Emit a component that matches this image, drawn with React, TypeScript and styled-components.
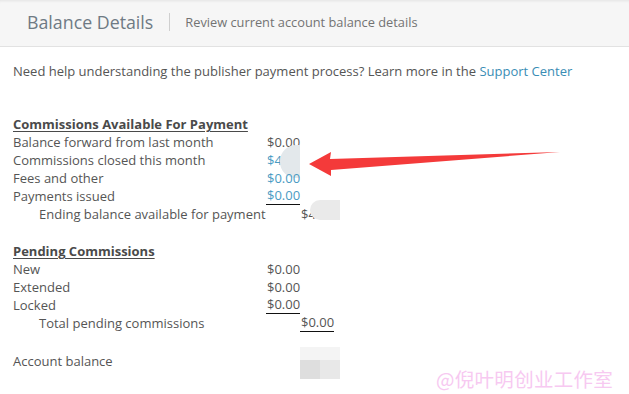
import React from "react";
import styled, { createGlobalStyle } from "styled-components";

const GlobalStyle = createGlobalStyle`
  html, body { margin: 0; padding: 0; background: #ffffff; }
  body { font-family: "Open Sans", "Noto Sans", sans-serif; color: #555; }
  * { box-sizing: border-box; }
`;

const Page = styled.div`
  position: relative;
  width: 629px;
  height: 394px;
  overflow: hidden;
  background: #fff;
`;

const Header = styled.header`
  height: 47px;
  display: flex;
  align-items: center;
  padding: 0 0 2px 27px;
  background: #f6f6f6;
  border-bottom: 1px solid #e2e2e2;
  box-shadow: inset 0 3px 3px -2px rgba(0, 0, 0, 0.08);
`;

const Title = styled.h1`
  margin: 0;
  font-size: 17.8px;
  font-weight: 400;
  color: #6f7a84;
`;

const Divider = styled.span`
  width: 1px;
  height: 18px;
  margin: 0 15px 0 16px;
  background: #cfcfcf;
`;

const Subtitle = styled.span`
  font-size: 12.8px;
  color: #737373;
`;

const Body = styled.main`
  padding: 15px 13px 0 13px;
`;

const Intro = styled.p`
  margin: 0;
  font-size: 13px;
  line-height: 18px;
  color: #555;
`;

const Link = styled.a`
  color: #3a8db5;
  text-decoration: none;
`;

const Ledger = styled.table<{ $gap: number }>`
  border-collapse: collapse;
  table-layout: fixed;
  width: 330px;
  margin-top: ${(p) => p.$gap}px;
  font-size: 13px;
  color: #555;
`;

const LabelCol = styled.col`
  width: 253px;
`;

const AmountCol = styled.col`
  width: 34px;
`;

const Row = styled.tr`
  height: 18px;
`;

const Heading = styled.th`
  height: 18px;
  text-align: left;
  font-weight: 700;
  text-decoration: underline;
  text-underline-offset: 2px;
  color: #4a4a4a;
  padding: 0;
  line-height: 18px;
  white-space: nowrap;
`;

const Label = styled.td<{ $indent?: boolean }>`
  height: 18px;
  padding: 0 0 0 ${(p) => (p.$indent ? 26 : 0)}px;
  line-height: 18px;
  white-space: nowrap;
`;

const Amount = styled.td<{ $link?: boolean }>`
  position: relative;
  height: 18px;
  padding: 0 0 0 1px;
  line-height: 18px;
  white-space: nowrap;
  vertical-align: top;
  color: ${(p) => (p.$link ? "#4a9bc3" : "#555")};
`;

const Ruled = styled.span`
  display: block;
  width: 34px;
  height: 18px;
  margin-left: -1px;
  padding-left: 1px;
  border-bottom: 1.5px solid #111;
  line-height: 17px;
`;

/* soft patch laid over a hidden figure */
const Masked = styled.span<{ $tone: string; $x: number; $y: number; $w: number; $h: number }>`
  position: absolute;
  left: ${(p) => p.$x}px;
  top: ${(p) => p.$y}px;
  width: ${(p) => p.$w}px;
  height: ${(p) => p.$h}px;
  border-radius: 16px 0 0 16px;
  background: ${(p) => p.$tone};
`;

const Smudge = styled.span`
  position: absolute;
  left: 0;
  top: -5px;
  display: grid;
  grid-template-columns: 20px 20px;
  grid-template-rows: 13px 19px;
`;

const Cell = styled.span<{ $tone: string }>`
  background: ${(p) => p.$tone};
`;

const Pointer = styled.svg`
  position: absolute;
  left: 0;
  top: 0;
  pointer-events: none;
`;

const Watermark = styled.div`
  position: absolute;
  left: 436px;
  top: 364px;
  font-family: "Noto Sans CJK SC", "Noto Sans", sans-serif;
  font-size: 19.5px;
  color: #f7c9f1;
  white-space: nowrap;
  letter-spacing: 0.3px;
`;

const Blank = styled.td``;

function Columns() {
  return (
    <colgroup>
      <LabelCol />
      <AmountCol />
      <col />
    </colgroup>
  );
}

export default function App() {
  return (
    <>
      <GlobalStyle />
      <Page>
        <Header>
          <Title>Balance Details</Title>
          <Divider />
          <Subtitle>Review current account balance details</Subtitle>
        </Header>
        <Body>
          <Intro>
            Need help understanding the publisher payment process? Learn more in the{" "}
            <Link href="#">Support Center</Link>
          </Intro>

          <Ledger $gap={35}>
            <Columns />
            <tbody>
              <Row>
                <Heading colSpan={3}>Commissions Available For Payment</Heading>
              </Row>
              <Row>
                <Label>Balance forward from last month</Label>
                <Amount>$0.00</Amount>
                <Blank />
              </Row>
              <Row>
                <Label>Commissions closed this month</Label>
                <Amount $link>
                  $4
                  <Masked $tone="#e3e8eb" $x={14} $y={-6} $w={20} $h={33} />
                </Amount>
                <Blank />
              </Row>
              <Row>
                <Label>Fees and other</Label>
                <Amount $link>$0.00</Amount>
                <Blank />
              </Row>
              <Row>
                <Label>Payments issued</Label>
                <Amount $link>
                  <Ruled>$0.00</Ruled>
                </Amount>
                <Blank />
              </Row>
              <Row>
                <Label $indent>Ending balance available for payment</Label>
                <Blank />
                <Amount>
                  $4
                  <Masked $tone="#eaeaea" $x={10} $y={-5} $w={30} $h={20} />
                </Amount>
              </Row>
            </tbody>
          </Ledger>

          <Ledger $gap={19}>
            <Columns />
            <tbody>
              <Row>
                <Heading colSpan={3}>Pending Commissions</Heading>
              </Row>
              <Row>
                <Label>New</Label>
                <Amount>$0.00</Amount>
                <Blank />
              </Row>
              <Row>
                <Label>Extended</Label>
                <Amount>$0.00</Amount>
                <Blank />
              </Row>
              <Row>
                <Label>Locked</Label>
                <Amount>
                  <Ruled>$0.00</Ruled>
                </Amount>
                <Blank />
              </Row>
              <Row>
                <Label $indent>Total pending commissions</Label>
                <Blank />
                <Amount>
                  <Ruled>$0.00</Ruled>
                </Amount>
              </Row>
            </tbody>
          </Ledger>

          <Ledger $gap={20}>
            <Columns />
            <tbody>
              <Row>
                <Label>Account balance</Label>
                <Blank />
                <Amount>
                  <Smudge>
                    <Cell $tone="#f4f4f4" />
                    <Cell $tone="#f4f4f4" />
                    <Cell $tone="#dedede" />
                    <Cell $tone="#e8e8e8" />
                  </Smudge>
                </Amount>
              </Row>
            </tbody>
          </Ledger>
        </Body>

        <Pointer width="629" height="394" viewBox="0 0 629 394">
          <polygon
            points="309,164 331,152 330,159 560,152 331,170 331,176"
            fill="#f43a3a"
          />
        </Pointer>
        <Watermark>@倪叶明创业工作室</Watermark>
      </Page>
    </>
  );
}
